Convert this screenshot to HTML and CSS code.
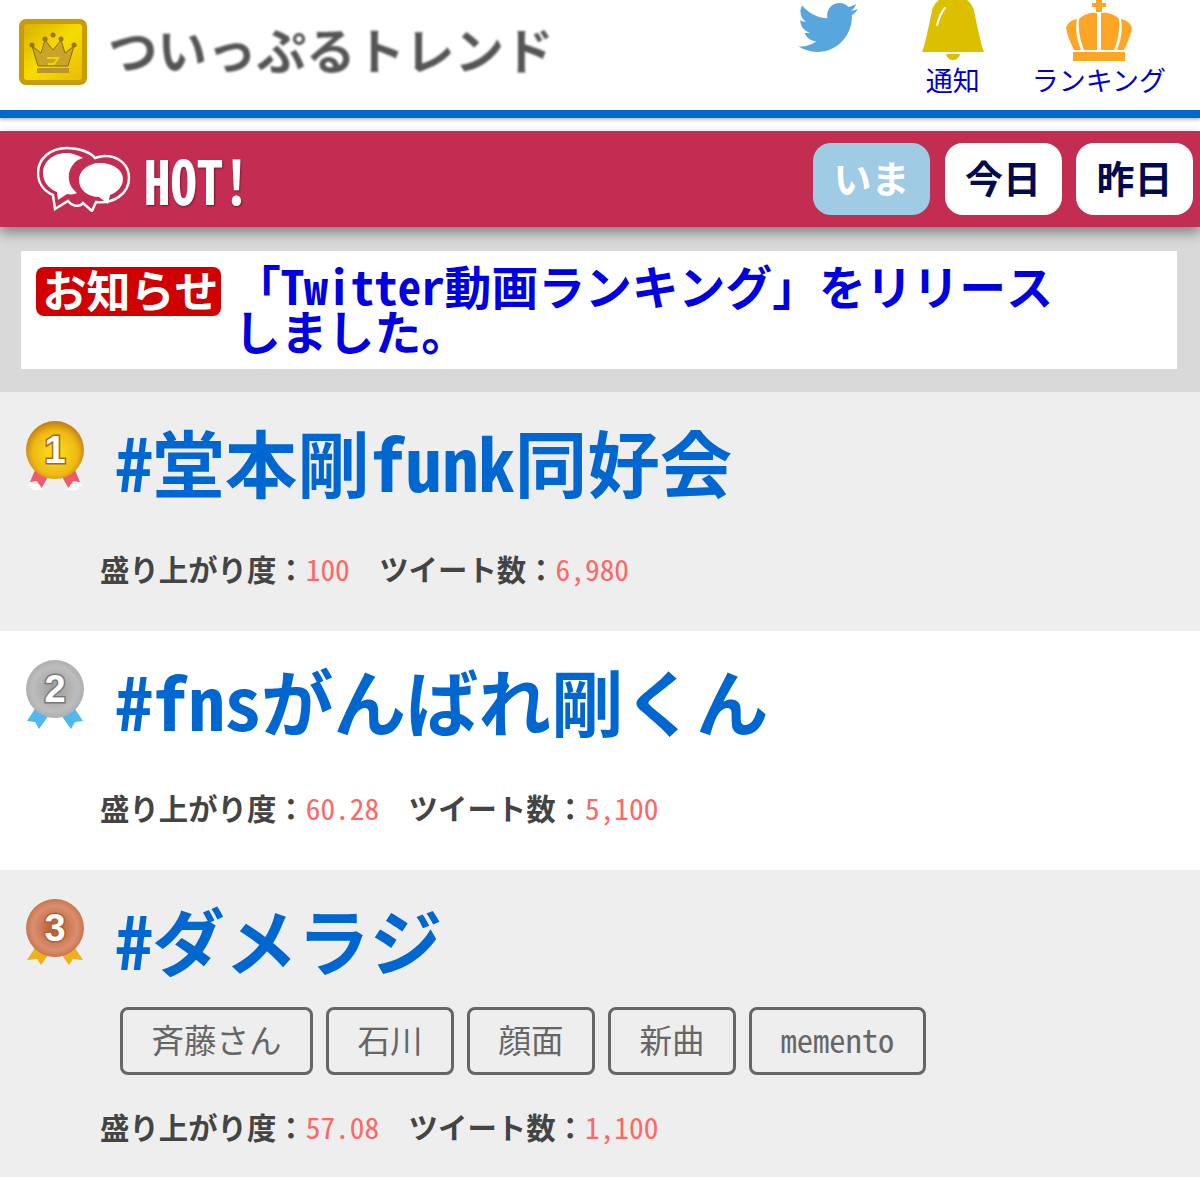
FILE: index.html
```html
<!DOCTYPE html>
<html lang="ja">

<head>
    <meta charset="UTF-8">
    <meta name="viewport" content="width=device-width, initial-scale=1.0">
    <title>ついっぷるトレンド</title>
    <link rel="stylesheet" href="styles.css">
</head>

<body>
    <header class="header">
        <a class="logo" href="#">
            <svg class="logoIcon" width="70" height="68" viewBox="0 0 70 68">
                <defs>
                    <linearGradient id="gold" x1="0" y1="0" x2="1" y2="1">
                        <stop offset="0" stop-color="#d8b000" />
                        <stop offset=".5" stop-color="#f8dc00" />
                        <stop offset="1" stop-color="#e8bc00" />
                    </linearGradient>
                </defs>
                <rect x="1" y="1" width="68" height="66" rx="7" fill="#c89c08" />
                <rect x="6" y="6" width="58" height="56" rx="3" fill="url(#gold)" />
                <path d="M14 28l9 7 4-13 8 10 8-10 4 13 9-7-6 20H20z" fill="#c8a428" stroke="#8a6a10" stroke-width="1" />
                <path d="M19 50h32v5H19z" fill="#b8962a" />
                <circle cx="14" cy="27" r="2.5" fill="#96741a" />
                <circle cx="27" cy="21" r="2.5" fill="#96741a" />
                <circle cx="35" cy="17" r="2.5" fill="#96741a" />
                <circle cx="43" cy="21" r="2.5" fill="#96741a" />
                <circle cx="56" cy="27" r="2.5" fill="#96741a" />
                <path d="M29 40h11l-4 6h-6" fill="none" stroke="#f4d400" stroke-width="2" />
            </svg>
            <span class="logoText">ついっぷるトレンド</span>
        </a>
        <nav class="nav">
            <a class="navItem twitter" href="#">
                <svg width="60" height="56" viewBox="0 0 24 22.4">
                    <path transform="translate(0 -1)" fill="#58a6de" d="M23.954 4.569c-.885.389-1.83.654-2.825.775 1.014-.611 1.794-1.574 2.163-2.723-.951.555-2.005.959-3.127 1.184-.896-.959-2.173-1.559-3.591-1.559-2.717 0-4.92 2.203-4.92 4.917 0 .39.045.765.127 1.124C7.691 8.094 4.066 6.13 1.64 3.161c-.427.722-.666 1.561-.666 2.475 0 1.71.87 3.213 2.188 4.096-.807-.026-1.566-.248-2.228-.616v.061c0 2.385 1.693 4.374 3.946 4.827-.413.111-.849.171-1.296.171-.314 0-.615-.03-.916-.086.631 1.953 2.445 3.377 4.604 3.417-1.68 1.319-3.809 2.105-6.102 2.105-.39 0-.779-.023-1.17-.067 2.189 1.394 4.768 2.209 7.557 2.209 9.054 0 13.999-7.496 13.999-13.986 0-.209 0-.42-.015-.63.961-.689 1.8-1.56 2.46-2.548l-.047-.02z" />
                </svg>
            </a>
            <a class="navItem bell" href="#">
                <svg width="64" height="62" viewBox="0 0 64 62">
                    <path d="M18 0C14 3 11 8 10.5 13 9 20 7 30 5 38 4 44 2 49 1 52H63C62 49 60 44 59 38 57 30 55 20 53.5 13 53 8 50 3 46 0Z" fill="#dcc000" />
                    <path d="M25 54H39C38 58 35 60 32 60S26 58 25 54Z" fill="#dcc000" />
                    <path d="M24 8C20 12 18 18 16 25" fill="none" stroke="#fff" stroke-width="2" stroke-linecap="round" />
                </svg>
                <span class="navLabel">通知</span>
            </a>
            <a class="navItem crown" href="#">
                <svg width="68" height="62" viewBox="0 0 68 62">
                    <path d="M31 0h6v3h4v4h-4v5h-6V7h-4V3h4z" fill="#ffa526" />
                    <path d="M32 13C25 12 18 15 14 19 13 30 15 40 19 50H32Z" fill="#ffa526" />
                    <path d="M36 13C43 12 50 15 54 19 55 30 53 40 49 50H36Z" fill="#ffa526" />
                    <path d="M1 28C3 22 7 20 12 19 10 30 12 40 16 50H9C5 42 2 34 1 28Z" fill="#ffa526" />
                    <path d="M67 28C65 22 61 20 56 19 58 30 56 40 52 50H59C63 42 66 34 67 28Z" fill="#ffa526" />
                    <path d="M8 52h52v9H8z" fill="#ffa526" />
                </svg>
                <span class="navLabel">ランキング</span>
            </a>
        </nav>
    </header>

    <section class="hotBar">
        <div class="hotTitle">
            <svg class="hotIcon" width="94" height="66" viewBox="0 0 94 66">
                <path d="M30 2C13 2 1 13 1 27c0 10 6 18 15 22l2 14 13-8c5 6 12 6 15 2l9 8 4-9c16 2 33-7 33-24 0-13-10-22-24-22-4 0-7 1-10 2C53 6 42 2 30 2z" fill="none" stroke="#fff" stroke-width="2.5" />
                <path d="M29 7C16 7 6 16 6 27c0 9 6 16 14 19l1 8 9-6c5 1 8 0 10-1-6-5-9-11-8-19 1-7 6-14 14-16-5-3-11-5-17-5z" fill="#fff" />
                <path d="M63 17c-12 0-21 8-21 17 0 10 9 17 20 17l9 7 2-9c8-3 13-9 13-16 0-9-10-16-23-16z" fill="#fff" />
            </svg>
            <span class="hotText">HOT!</span>
        </div>
        <ul class="tabs">
            <li class="tab tabActive">いま</li>
            <li class="tab">今日</li>
            <li class="tab">昨日</li>
        </ul>
    </section>

    <section class="notice">
        <div class="noticeBox">
            <span class="noticeBadge">お知らせ</span>
            <a class="noticeLink" href="#">「Twitter動画ランキング」をリリースしました。</a>
        </div>
    </section>

    <ol class="ranking">
        <li class="row">
            <div class="rowHead">
                <svg class="medal" width="60" height="72" viewBox="0 0 60 72">
                    <defs>
                        <radialGradient id="m1" cx=".5" cy=".55" r=".55">
                            <stop offset="0" stop-color="#ffe21a" />
                            <stop offset=".7" stop-color="#eeb915" />
                            <stop offset="1" stop-color="#c07a12" />
                        </radialGradient>
                    </defs>
                    <path d="M10 50l-5 12 7-1 4 8 8-14zM50 50l5 12-7-1-4 8-8-14z" fill="#f05a6a" />
                    <path d="M2 64h12l4 6H8zM46 64h12l-6 6H42z" fill="#fff" />
                    <circle cx="30" cy="30" r="29" fill="url(#m1)" />
                    <text class="medalNum" x="30" y="43" stroke="#a86a18">1</text>
                </svg>
                <a class="title" href="#">#堂本剛funk同好会</a>
            </div>
            <p class="meta">盛り上がり度：<span class="num">100</span>　ツイート数：<span class="num">6,980</span></p>
        </li>
        <li class="row">
            <div class="rowHead">
                <svg class="medal" width="60" height="72" viewBox="0 0 60 72">
                    <defs>
                        <radialGradient id="m2" cx=".5" cy=".5" r=".55">
                            <stop offset="0" stop-color="#9a9a9a" />
                            <stop offset=".7" stop-color="#bdbdbd" />
                            <stop offset="1" stop-color="#a8a8a8" />
                        </radialGradient>
                    </defs>
                    <path d="M10 50L2 62l8 1 4 7 10-14zM50 50l8 12-8 1-4 7-10-14z" fill="#4fb8f0" />
                    <circle cx="30" cy="30" r="29" fill="url(#m2)" />
                    <text class="medalNum" x="30" y="43" stroke="#777">2</text>
                </svg>
                <a class="title" href="#">#fnsがんばれ剛くん</a>
            </div>
            <p class="meta">盛り上がり度：<span class="num">60.28</span>　ツイート数：<span class="num">5,100</span></p>
        </li>
        <li class="row">
            <div class="rowHead">
                <svg class="medal" width="60" height="72" viewBox="0 0 60 72">
                    <defs>
                        <radialGradient id="m3" cx=".5" cy=".5" r=".55">
                            <stop offset="0" stop-color="#b8562a" />
                            <stop offset=".7" stop-color="#d98f6f" />
                            <stop offset="1" stop-color="#c8683c" />
                        </radialGradient>
                    </defs>
                    <path d="M10 50L2 62l10-1 4 6 8-11zM50 50l8 12-10-1-4 6-8-11z" fill="#eab21e" />
                    <circle cx="30" cy="30" r="29" fill="url(#m3)" />
                    <text class="medalNum" x="30" y="43" stroke="#b0602e">3</text>
                </svg>
                <a class="title" href="#">#ダメラジ</a>
            </div>
            <ul class="tags">
                <li class="tag">斉藤さん</li>
                <li class="tag">石川</li>
                <li class="tag">顔面</li>
                <li class="tag">新曲</li>
                <li class="tag">memento</li>
            </ul>
            <p class="meta">盛り上がり度：<span class="num">57.08</span>　ツイート数：<span class="num">1,100</span></p>
        </li>
    </ol>
</body>

</html>
```

FILE: styles.css
```css
* {
    margin: 0;
    padding: 0;
    list-style: none;
    box-sizing: border-box;
}

body {
    font-family: "Noto Sans Mono CJK JP", "Noto Sans CJK JP", sans-serif;
    background: #fff;
    overflow-x: hidden;
}

a {
    text-decoration: none;
}

.header {
    height: 118px;
    background: #fff;
    border-bottom: 8px solid #0066d0;
    box-shadow: 0 2px 3px rgba(0, 0, 0, .25);
    display: flex;
    justify-content: space-between;
    padding-left: 18px;
}

.logo {
    display: flex;
    align-items: flex-start;
    padding-top: 18px;
}

.logoIcon {
    filter: blur(.6px);
}

.logoText {
    font-size: 49.5px;
    line-height: 62px;
    font-weight: 700;
    color: #555;
    margin-left: 20px;
    filter: blur(.8px);
}

.nav {
    display: flex;
    align-items: flex-start;
}

.navItem {
    display: flex;
    flex-direction: column;
    align-items: center;
}

.twitter {
    margin-right: 63px;
}

.bell {
    margin-right: 47px;
}

.crown {
    margin-right: 34px;
}

.navLabel {
    font-family: "Noto Sans CJK JP", sans-serif;
    font-size: 27px;
    line-height: 36px;
    color: #0000cc;
}

.hotBar {
    margin-top: 13px;
    height: 96px;
    background: #c32d52;
    display: flex;
    justify-content: space-between;
    align-items: center;
    padding: 0 7px 0 37px;
    position: relative;
    box-shadow: 0 6px 12px rgba(0, 0, 0, .4);
}

.hotTitle {
    display: flex;
    align-items: center;
}

.hotIcon {
    filter: blur(.5px);
}

.hotText {
    font-size: 60px;
    line-height: 66px;
    font-weight: 700;
    color: #fff;
    margin-left: 13px;
    transform: scaleX(.88);
    transform-origin: left center;
    text-shadow: 1px 1px 2px #7a1030;
}

.tabs {
    display: flex;
    gap: 14.5px;
}

.tab {
    width: 117px;
    height: 72px;
    border-radius: 18px;
    background: #fff;
    color: #000a50;
    font-size: 38px;
    font-weight: 700;
    line-height: 68px;
    text-align: center;
}

.tabActive {
    background: #a0cbe5;
    color: #fff;
}

.notice {
    height: 165px;
    background: #d9d9d9;
    padding: 24px 23px 23px 21px;
}

.noticeBox {
    height: 118px;
    background: #fff;
    display: flex;
    align-items: flex-start;
    padding: 11px 0 0 15px;
}

.noticeBadge {
    margin: 5px 13px 0 0;
    padding-left: 4px;
    width: 185px;
    height: 49px;
    flex: none;
    background: #d00000;
    border-radius: 8px;
    color: #fff;
    font-size: 44px;
    font-weight: 700;
    line-height: 44px;
    text-align: center;
    white-space: nowrap;
}

.noticeLink {
    max-width: 850px;
    font-size: 46.8px;
    line-height: 45px;
    font-weight: 700;
    color: #0000e0;
}

.row {
    padding: 24px 0 43px 25px;
    background: #eee;
}

.row:nth-child(even) {
    background: #fff;
}

.row:last-child {
    padding-bottom: 31px;
}

.rowHead {
    display: flex;
    align-items: flex-start;
    margin-bottom: 23px;
}

.rowHead + .meta {
    margin-top: 42px;
}

.medal {
    flex: none;
    margin: 4px 31px 0 0;
}

.medalNum {
    font-family: "Liberation Sans", sans-serif;
    font-size: 38px;
    font-weight: 700;
    fill: #fff;
    stroke-width: 3px;
    paint-order: stroke;
    text-anchor: middle;
}

.title {
    font-size: 72.5px;
    line-height: 90px;
    font-weight: 700;
    color: #0066d0;
    white-space: nowrap;
}

.tags {
    display: flex;
    gap: 13px;
    margin: 0 0 31px 95px;
}

.tag {
    height: 68px;
    padding: 0 28.5px;
    border: 3px solid #666;
    border-radius: 8px;
    font-size: 32.5px;
    line-height: 58px;
    color: #666;
}

.meta {
    margin-left: 75px;
    font-size: 29.4px;
    line-height: 40px;
    font-weight: 700;
    color: #444;
}

.num {
    font-weight: 400;
    color: #f66;
}
```
